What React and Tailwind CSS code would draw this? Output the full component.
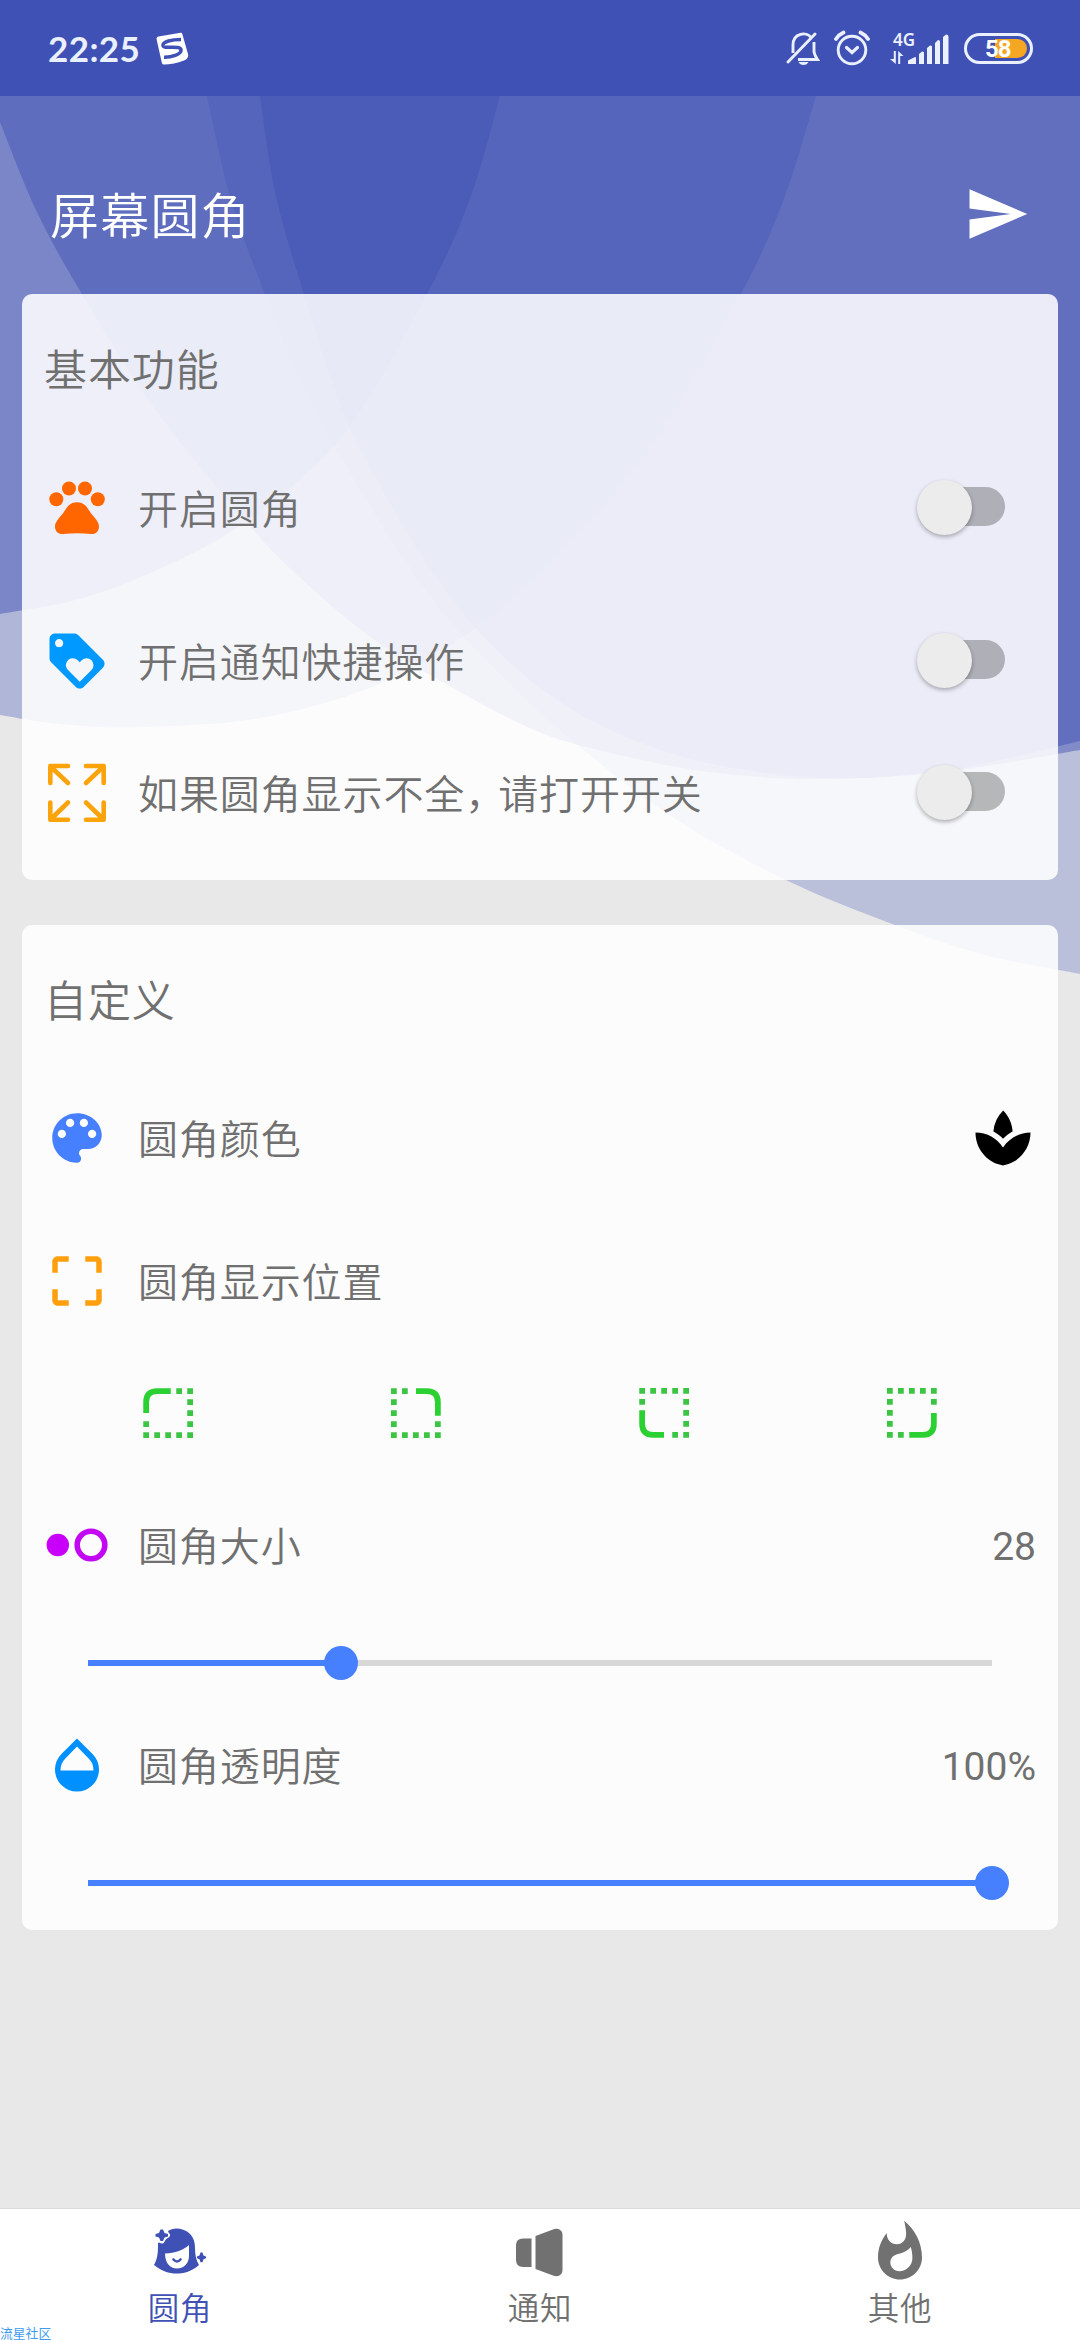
import React from "react";
import { MdCropFree, MdLoyalty, MdOpacity, MdSend, MdSpa, MdWhatshot } from "react-icons/md";

/* Smooth path through a list of points (Catmull-Rom to Bezier). */
function smooth(points) {
  let d = `M${points[0][0]} ${points[0][1]}`;
  for (let i = 0; i < points.length - 1; i++) {
    const p0 = points[i - 1] || points[i];
    const p1 = points[i];
    const p2 = points[i + 1];
    const p3 = points[i + 2] || p2;
    d += `C${p1[0] + (p2[0] - p0[0]) / 6} ${p1[1] + (p2[1] - p0[1]) / 6} ${p2[0] - (p3[0] - p1[0]) / 6} ${p2[1] - (p3[1] - p1[1]) / 6} ${p2[0]} ${p2[1]}`;
  }
  return d;
}

const waves = [
  { points: [[500, 96], [471, 196], [427, 294], [344, 434], [244, 523], [150, 573], [75, 600], [0, 614]], close: "L0 96Z", alpha: 0.48 },
  { points: [[816, 96], [785, 196], [741, 294], [650, 448], [540, 574], [458, 640], [372, 687], [260, 718], [140, 727], [60, 724], [0, 715]], close: "L0 96Z", alpha: 0.33 },
  { points: [[-10, 96], [0, 122], [37, 212], [82, 294], [153, 406], [247, 523], [307, 584], [372, 638], [437, 679], [532, 729], [607, 752], [710, 772], [820, 779], [950, 771], [1080, 750]], close: "L1080 96Z", alpha: 0.47 },
  { points: [[207, 96], [230, 196], [265, 294], [319, 418], [413, 572], [490, 664], [586, 752], [680, 822], [788, 881], [895, 925], [985, 955], [1080, 974]], close: "L1080 96Z", alpha: 0.27 },
  { points: [[260, 96], [276, 196], [304, 294], [341, 407], [373, 473], [424, 560], [473, 625], [535, 684], [610, 730], [707, 763], [830, 778], [950, 770], [1080, 741]], close: "L1080 96Z", alpha: 0.47 },
];

function Waves() {
  return (
    <svg className="absolute left-0 top-24" width="1080" height="900" viewBox="0 96 1080 900">
      {waves.map((w, i) => (
        <path key={i} d={smooth(w.points) + w.close} fill="#3f51b5" fillOpacity={w.alpha} />
      ))}
    </svg>
  );
}

function StatusBar() {
  return (
    <header className="flex h-24 items-center justify-between bg-[#3f51b5] pl-12 pr-[47px] text-[#eaf0ff]">
      <div className="flex items-center">
        <span className="w-[108px] whitespace-nowrap font-[Lato,sans-serif] text-[35px] font-bold leading-none tracking-[0.4px]">22:25</span>
        <svg width="33" height="33" viewBox="0 0 33 33">
          <path d="M2.6 4.6 24.5.7Q26 .5 26.300 2L32 22c.8 3-1 5.400-4 6.500Q18 32.400 7.800 32.500q-1.600 0-1.900-1.600L.6 7.500Q.2 5 2.600 4.600Z" fill="#fff" />
          <path d="M25 7.500C16 7.500 6.500 9.500 7 13.500c.6 4 17.500-.8 18 4.500.4 4.500-10 7.500-17 7.300" fill="none" stroke="#3f51b5" strokeWidth="3.600" />
        </svg>
      </div>
      <div className="flex items-center">
        <svg width="34" height="35" viewBox="0 0 34 35" fill="none" stroke="currentColor" strokeWidth="2.900">
          <path d="M7 22V14C7 1.500 21 .5 25 6.500M28 11v9q0 3 3.500 8.500H12" />
          <path d="M2 31 29 3" strokeLinecap="round" />
          <path d="M12.500 31h10q-1.500 3-5 3t-5-3Z" fill="currentColor" stroke="none" />
        </svg>
        <svg className="ml-[14px]" width="36" height="36" viewBox="0 0 36 36" fill="none" stroke="currentColor" strokeWidth="2.900">
          <circle cx="18" cy="20" r="13.800" />
          <path d="M12.500 17.500 18 22.500l5.500-5" strokeWidth="3.200" strokeLinecap="round" />
          <path d="M2 9Q5 4.500 9.500 2.500M34 9Q31 4.500 26.500 2.500" strokeWidth="3.800" strokeLinecap="round" />
        </svg>
        <div className="ml-5 flex h-8 items-end">
          <div className="flex w-[18px] flex-col items-start">
            <span className="ml-[3px] whitespace-nowrap font-['Noto_Sans',sans-serif] text-[17px] font-semibold leading-[16px]">4G</span>
            <svg className="mt-[3px]" width="14" height="13" viewBox="0 0 14 13" fill="currentColor">
              <path d="M3.800 0H5.800V13L0 8H3.800ZM8.200 0 13.500 5H10.200V13H8.200Z" />
            </svg>
          </div>
          <svg width="41" height="30" viewBox="0 0 41 30" fill="currentColor">
            <path d="M0 30V26.500L7 23q1 0 1 1V30ZM11 30V20l3-2.500q2 0 2 1V30ZM19 30V14l3-2.500q2 0 2 1V30ZM27 30V9l3-3q2 0 2 1.500V30ZM35 30V3l3-2.500q2.500 0 2.500 2V30Z" />
          </svg>
        </div>
        <div className="ml-[15px] flex h-[31px] w-[69px] items-center justify-end rounded-full border-[3px] border-[#eaf0ff] pr-[3px]">
          <div className="relative h-[19px] w-8 rounded-r-full bg-[#f5a623]">
            <span className="absolute -left-[10px] top-0 font-[Roboto,sans-serif] text-[24px] font-bold leading-[20px] tracking-[-1px] text-white">58</span>
          </div>
        </div>
      </div>
    </header>
  );
}

function Paw() {
  return (
    <svg width="66" height="66" viewBox="0 0 66 66" fill="#ff6600">
      <circle cx="12.300" cy="24.300" r="7" />
      <circle cx="25" cy="13.500" r="7" />
      <circle cx="41" cy="13.500" r="7" />
      <circle cx="53.800" cy="24.300" r="7" />
      <path d="M24.500 30.500C29 26 37 26 41.500 30.500C44 33 45 36 48 39.500C51 43 55 47 55 51.500C55 57 51 59.500 47 59Q33 57.500 19.500 59C15 59.500 11 57 11 51.500C11 47 15 43 18 39.500C21 36 22 33 24.500 30.500Z" />
    </svg>
  );
}

function Palette() {
  return (
    <svg width="66" height="66" viewBox="0 0 24 24" fill="#4680ff">
      <path d="M12 3c-4.970 0-9 4.030-9 9s4.030 9 9 9c.83 0 1.500-.67 1.500-1.500 0-.39-.15-.74-.39-1.010-.23-.26-.38-.61-.38-.99 0-.83.67-1.500 1.500-1.500H16c2.760 0 5-2.240 5-5 0-4.420-4.030-8-9-8Z" />
      <g fill="#fff">
        <circle cx="6.500" cy="10.500" r="1.500" />
        <circle cx="9.500" cy="6.500" r="1.500" />
        <circle cx="14.500" cy="6.500" r="1.500" />
        <circle cx="17.500" cy="10.500" r="1.500" />
      </g>
    </svg>
  );
}

function ExpandArrows() {
  return (
    <svg width="66" height="66" viewBox="0 0 66 66" fill="none" stroke="#fba30a" strokeWidth="4.600" strokeLinecap="round" strokeLinejoin="round">
      <path d="M24 6H6.300V23M7 7 24 23M42 6H59.700V23M59 7 42 23M24 59.700H6.300V42.500M7 59 24 42.500M42 59.700H59.700V42.500M59 59 42 42.500" />
    </svg>
  );
}

function CirclePair() {
  return (
    <svg width="66" height="66" viewBox="0 0 66 66">
      <circle cx="13.800" cy="33" r="11.200" fill="#c800fa" />
      <circle cx="47" cy="33" r="13.800" fill="none" stroke="#c407f2" strokeWidth="5.600" />
    </svg>
  );
}

const dots = [[3, 3], [7, 3], [11, 3], [15, 3], [19, 3], [3, 7], [19, 7], [19, 11], [19, 15], [3, 15], [3, 19], [7, 19], [11, 19], [15, 19], [19, 19]];

/* Dotted square whose top-left corner is rounded; turned to mark the others. */
function Corner({ className }) {
  return (
    <svg className={className} width="66" height="66" viewBox="0 0 24 24">
      {dots
        .filter(([x, y]) => !(x < 14 && y < 4) && !(y < 10 && x < 4))
        .map(([x, y]) => (
          <rect key={`${x}-${y}`} x={x} y={y} width="2.100" height="2.100" fill="#3cc544" />
        ))}
      <path d="M4.050 12V8Q4.050 4.050 8 4.050H13" fill="none" stroke="#2bd133" strokeWidth="2.100" />
    </svg>
  );
}

function Switch() {
  return (
    <div className="relative mb-1 mr-[31px] flex h-[39px] w-[81px] items-center rounded-full bg-black/26">
      <div className="absolute -left-[7px] -top-[7px] size-[55px] rounded-full bg-[#ececec] shadow-[0_2px_4px_rgba(0,0,0,0.3)]" />
    </div>
  );
}

function Row({ icon, label, className, children }) {
  return (
    <div className={`flex items-center ${className}`}>
      <div className="flex w-[66px] justify-center">{icon}</div>
      <span className="mb-[2px] ml-7 flex-1 whitespace-nowrap text-[40px] leading-none tracking-[0.9px]">{label}</span>
      {children}
    </div>
  );
}

function Card({ title, className, children }) {
  return (
    <section className={`mx-[22px] rounded-[10px] bg-white/87 px-[22px] ${className}`}>
      <h2 className="flex h-[150px] items-center whitespace-nowrap pb-[4px] text-[43px] leading-none tracking-[0.9px]">{title}</h2>
      {children}
    </section>
  );
}

function Slider({ percent, className }) {
  return (
    <div className={`mx-11 flex items-center ${className}`}>
      <div className="relative h-[6px] w-full bg-[#d8d8d8]">
        <div className="h-full bg-[#4680ff]" style={{ width: `${percent}%` }} />
        <div className="absolute -top-[14px] size-[34px] -translate-x-1/2 rounded-full bg-[#4680ff]" style={{ left: `${percent}%` }} />
      </div>
    </div>
  );
}

function GirlIcon() {
  return (
    <svg width="66" height="66" viewBox="0 0 66 66" fill="#3f51b5">
      <path d="M21 12C26 8 36 8.500 42 14C47 18.500 48 24 48 29C48 36 49 41 52 46C44 53 36 54.500 29.500 54.500C22 54.500 14 52 7 46C10 41 11 35 11 28V24L15 23L20 19L22 15Z" />
      <path d="M18 34.500C28 34 37 31 42 26V37C42 45 36 49.500 30 49.500C23 49.500 18 44 18 34.500Z" fill="#fff" />
      <path d="M26.500 40.500Q30 44.500 33.500 40.500" fill="none" stroke="#3f51b5" strokeWidth="2.600" strokeLinecap="round" />
      <path d="M15 10 17 14 20.500 16.200 17 18.500 15 22 12.500 18.500 9.500 16.200 12.500 14Z" fill="#fff" stroke="#fff" strokeWidth="5" strokeLinejoin="round" />
      <path d="M13.500 10.500h2.500L17.500 14l3.500 1v2.500l-3.500 1L16 22h-2.500L12 18.500l-3.500-1V15l3.500-1Z" />
      <path d="M53.500 33.500h2l1 3 2.500 1v1.800l-2.500 1-1 3h-2l-1-3-2.500-1v-1.800l2.500-1Z" />
    </svg>
  );
}

function SpeakerIcon() {
  return (
    <svg width="66" height="66" viewBox="0 0 66 66" fill="#717171">
      <path d="M16 19.500H24.500V48H16Q9 48 9 41V26Q9 19.500 16 19.500Z" />
      <path d="M28.500 17 46 10.500C51 8.500 55.500 11 55.500 16V51C55.500 56 51 58.500 46 56.500L28.500 50Z" />
    </svg>
  );
}

function Tab({ icon, label, className }) {
  return (
    <div className={`flex flex-1 flex-col items-center pt-[10px] ${className}`}>
      {icon}
      <span className="mt-1 text-[31.500px] leading-[34px] tracking-[0.8px]">{label}</span>
    </div>
  );
}

export default function App() {
  return (
    <div className="relative flex h-[2340px] w-[1080px] flex-col overflow-hidden bg-[#e8e8e8] font-['Noto_Sans_CJK_SC',sans-serif] font-[350] text-[#707070]">
      <Waves />
      <div className="relative flex flex-1 flex-col">
        <StatusBar />
        <div className="flex h-[198px] items-center justify-between pl-[50px] pr-[50px] pt-[38px] text-white">
          <h1 className="pb-[3px] text-[49px] leading-none tracking-[1.200px]">屏幕圆角</h1>
          <MdSend size={66} />
        </div>

        <Card title="基本功能" className="h-[586px]">
          <Row className="h-[128px]" icon={<Paw />} label="开启圆角"><Switch /></Row>
          <Row className="h-[178px]" icon={<MdLoyalty size={66} color="#0099ff" />} label="开启通知快捷操作"><Switch /></Row>
          <Row
            className="h-[86px]"
            icon={<ExpandArrows />}
            label={<>如果圆角显示不全<span className="tracking-[-7px]">，</span>请打开开关</>}
          >
            <Switch />
          </Row>
        </Card>

        <Card title="自定义" className="mt-[45px] h-[1005px]">
          <Row className="h-[126px]" icon={<Palette />} label="圆角颜色">
            <MdSpa size={66} color="#000" />
          </Row>
          <Row className="h-[160px]" icon={<MdCropFree size={66} color="#ff9f0e" />} label="圆角显示位置" />
          <div className="flex h-[104px] items-center justify-around">
            <Corner />
            <Corner className="rotate-90" />
            <Corner className="-rotate-90" />
            <Corner className="rotate-180" />
          </div>
          <Row className="h-[160px]" icon={<CirclePair />} label="圆角大小">
            <span className="pt-[4px] font-[Roboto,sans-serif] text-[39px] font-normal leading-none">28</span>
          </Row>
          <Slider className="h-[76px]" percent={28} />
          <Row className="h-[128px]" icon={<MdOpacity size={66} color="#0090ff" />} label="圆角透明度">
            <span className="pt-[4px] font-[Roboto,sans-serif] text-[39px] font-normal leading-none">100%</span>
          </Row>
          <Slider className="h-[108px]" percent={100} />
        </Card>

        <nav className="mt-auto flex h-[132px] border-t border-[#dadada] bg-white">
          <Tab icon={<GirlIcon />} label="圆角" className="text-[#3f51b5]" />
          <Tab icon={<SpeakerIcon />} label="通知" />
          <Tab icon={<MdWhatshot size={66} color="#717171" />} label="其他" />
        </nav>
      </div>
      <span className="absolute left-0 top-[2326px] whitespace-nowrap text-[12.800px] font-normal leading-[14px] text-[#3d9bf0]">流星社区</span>
    </div>
  );
}
